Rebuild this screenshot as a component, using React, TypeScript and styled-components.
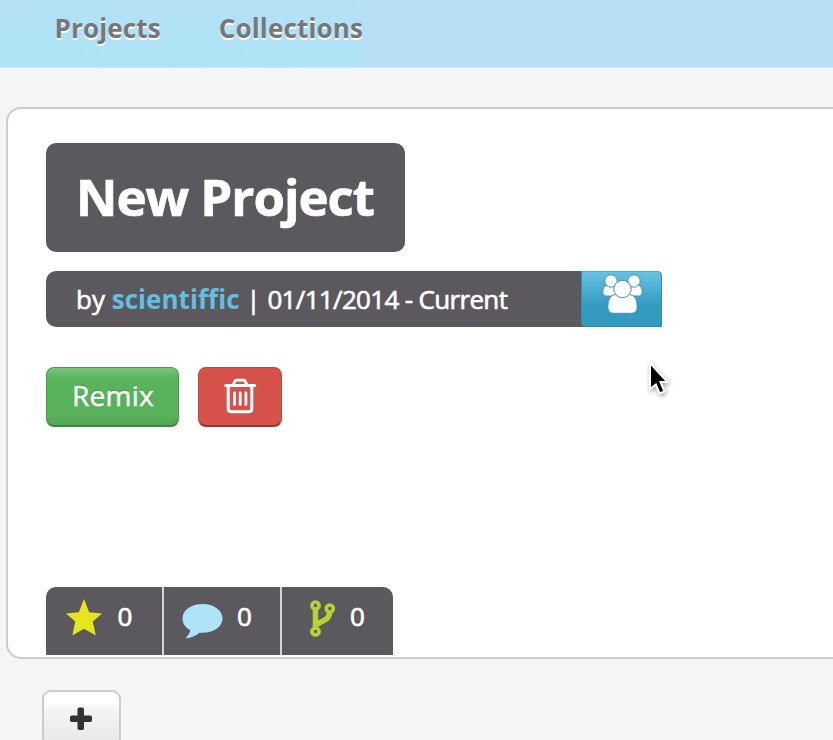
import React from "react";
import styled, { createGlobalStyle } from "styled-components";

const GlobalStyle = createGlobalStyle`
  *, *::before, *::after { box-sizing: border-box; }
  html, body, #root { height: 100%; }
  body {
    margin: 0;
    overflow: hidden;
    background: #f4f5f7;
    font-family: "Open Sans", "Noto Sans", sans-serif;
  }
`;

const Page = styled.div`
  position: relative;
  height: 740px;
  overflow: hidden;
`;

const NavBar = styled.nav`
  display: flex;
  gap: 58px;
  height: 68px;
  padding: 10px 0 0 54.5px;
  background:
    linear-gradient(rgba(183, 223, 246, 0.7), rgba(183, 223, 246, 0) 60px),
    linear-gradient(90deg, #ade4f6 0, #b0e3f6 355px, #b7dff6 368px, #b7dff6 100%);
  border-bottom: 1px solid #c9e8f6;
`;

const NavLink = styled.a`
  color: #77777a;
  font-size: 26px;
  font-weight: 700;
  line-height: 36px;
  letter-spacing: 0.15px;
  text-shadow: 0 2px 0 #fff;
`;

const Panel = styled.main`
  display: flex;
  flex-direction: column;
  align-items: flex-start;
  width: 860px;
  height: 552px;
  margin: 39px 0 0 6px;
  padding: 34px 0 0 38px;
  background: #fff;
  border: 2px solid #cbccce;
  border-radius: 15px;
`;

const Title = styled.h1`
  width: 359px;
  height: 109px;
  margin: 0;
  padding-left: 30px;
  border-radius: 10px;
  background: #5b595e;
  color: #fff;
  font-size: 51px;
  font-weight: 700;
  line-height: 106px;
  letter-spacing: -1.05px;
  white-space: nowrap;
  -webkit-text-stroke: 0.7px #fff;
`;

const Byline = styled.div`
  display: flex;
  width: 616px;
  height: 56px;
  margin-top: 19px;
  border-radius: 10px 5px 0 10px;
  background: #5b595e;
  overflow: hidden;
`;

const BylineText = styled.div`
  flex: 1;
  padding-left: 30px;
  color: #fff;
  font-size: 26px;
  line-height: 57px;
  white-space: nowrap;
  -webkit-text-stroke: 0.6px #fff;
`;

const Author = styled.a`
  color: #62bfe2;
  font-weight: 700;
  letter-spacing: 0.05px;
  -webkit-text-stroke: 0;
`;

const Dates = styled.span`
  letter-spacing: -0.67px;
`;

const TeamButton = styled.button`
  display: flex;
  justify-content: center;
  width: 81px;
  padding: 0;
  border: 1px solid #2f8fbb;
  border-top-color: #4cabd0;
  border-radius: 0 5px 0 5px;
  background: linear-gradient(#66c2e2 0, #5bb9da 8px, #339bbf 34px, #339bbf 100%);
`;

const Actions = styled.div`
  display: flex;
  gap: 19px;
  margin-top: 40px;
`;

const RemixButton = styled.button`
  width: 133px;
  height: 60px;
  padding: 0 0 3px 1px;
  border: 1px solid #4a9b50;
  border-bottom: 2px solid #3e8444;
  border-radius: 8px;
  background: linear-gradient(#7cc67d 0, #5ab45d 10px, #58b25b 46px, #51a655 100%);
  color: #fff;
  font: 400 28px "Open Sans", "Noto Sans", sans-serif;
  letter-spacing: 0.3px;
  text-shadow: 0 -1px 1px #37803a;
  -webkit-text-stroke: 0.5px #fff;
`;

const DeleteButton = styled.button`
  width: 84px;
  height: 60px;
  padding: 0;
  border: 1px solid #c04c40;
  border-bottom: 2px solid #9c352e;
  border-radius: 8px;
  background: #d6514a;
`;

const Stats = styled.div`
  display: flex;
  gap: 2px;
  height: 68px;
  margin: auto 0 2px;
  border-radius: 10px 10px 0 0;
  background: #d5d5d6;
  overflow: hidden;
`;

const Stat = styled.div<{ $width: number; $left: number; $gap: number }>`
  display: flex;
  gap: ${(p) => p.$gap}px;
  width: ${(p) => p.$width}px;
  padding-left: ${(p) => p.$left}px;
  background: #5b595e;
  color: #fff;
  font-size: 26px;
  line-height: 59px;
  -webkit-text-stroke: 0.7px #fff;
`;

const AddButton = styled.button`
  display: block;
  width: 79px;
  height: 60px;
  margin: 31px 0 0 42px;
  padding: 0;
  border: 2px solid #cbccce;
  border-radius: 9px 9px 0 0;
  background: linear-gradient(#fff 0, #fff 12px, #f2fbfc 13px, #f2fbfc 16px, #f5f5f5 17px, #e8e8e8 50px);
`;

const Icon = styled.svg`
  display: block;
  flex: none;
`;

const Pointer = styled.svg`
  position: absolute;
  left: 646px;
  top: 358px;
  filter: drop-shadow(1px 2px 2px rgba(0, 0, 0, 0.35));
`;

function TeamIcon() {
  return (
    <Icon width="48" height="48" viewBox="-0.5 0 48 48" fill="#fff" stroke="#3f93b5" strokeWidth="1">
      <path d="M7 24Q4 24 4.300 20Q4.500 13.500 8 13.500H19V24ZM41 24Q44 24 43.700 20Q43.500 13.500 40 13.500H29V24Z" />
      <circle cx="12.500" cy="9" r="6.200" />
      <circle cx="35.500" cy="9" r="6.200" />
      <path d="M15 41.300Q9.300 41.300 9.300 35Q9.300 23 17 22.500H31Q38.700 23 38.700 35Q38.700 41.300 33 41.300Z" />
      <circle cx="24" cy="17" r="8.700" />
    </Icon>
  );
}

function TrashIcon() {
  return (
    <Icon width="82" height="57" viewBox="0 0 82 57" fill="none" stroke="#fff" strokeLinecap="round" strokeLinejoin="round">
      <path strokeWidth="3" d="M26.700 17.500H55.800M29.200 18.500V40.500Q29.200 43.800 32.500 43.800H49.500Q52.800 43.800 52.800 40.500V18.500" />
      <path strokeWidth="2.800" d="M34.200 17L36 13Q36.500 12.200 37.500 12.200H44.500Q45.500 12.200 46 13L48 17" />
      <path strokeWidth="2.800" d="M35.500 25V36.500M41.200 25V36.500M46.900 25V36.500" />
    </Icon>
  );
}

function StarIcon() {
  return (
    <Icon width="36" height="68" viewBox="0 0 36 68" fill="#e6e61d">
      <path d="M18 12L23.200 25.300L36 26.500L26.800 34.500L29.800 48.500L18 41.800L6.300 48.500L9.300 34.500L0 26.500L12.800 25.300Z" />
    </Icon>
  );
}

function CommentIcon() {
  return (
    <Icon width="41" height="68" viewBox="0 0 41 68" fill="#afe3f8">
      <path d="M20.500 17C9 17 0.500 23.300 0.500 31.500C0.500 36.500 3.500 40.500 8.200 43.100C8 46.500 6 48.500 3.500 51.500C9 51 14 48.800 17.500 45.700C30 46.800 40.500 40.500 40.500 31.500C40.500 23.300 32 17 20.500 17Z" />
    </Icon>
  );
}

function ForkIcon() {
  return (
    <Icon width="26" height="68" viewBox="0 0 26 68" fill="none" stroke="#b5d334">
      <path strokeWidth="5.500" d="M6.500 20V44M20.800 24C20.500 34 13 33 7.500 37.500" />
      <g strokeWidth="3.700" fill="#5b595e">
        <circle cx="6.500" cy="18.500" r="3.500" />
        <circle cx="20.800" cy="21.500" r="3.500" />
        <circle cx="6.500" cy="44.500" r="3.500" />
      </g>
    </Icon>
  );
}

function PlusIcon() {
  return (
    <Icon width="75" height="56" viewBox="0 0 75 56" fill="#333">
      <rect x="26" y="23.500" width="22" height="6.500" rx="1.800" />
      <rect x="33.500" y="15.500" width="6.500" height="22.500" rx="1.800" />
    </Icon>
  );
}

export default function App() {
  return (
    <>
      <GlobalStyle />
      <Page>
        <NavBar>
          <NavLink>Projects</NavLink>
          <NavLink>Collections</NavLink>
        </NavBar>
        <Panel>
          <Title>New Project</Title>
          <Byline>
            <BylineText>
              by <Author>scientiffic</Author> | <Dates>01/11/2014 - Current</Dates>
            </BylineText>
            <TeamButton aria-label="Team">
              <TeamIcon />
            </TeamButton>
          </Byline>
          <Actions>
            <RemixButton>Remix</RemixButton>
            <DeleteButton aria-label="Delete">
              <TrashIcon />
            </DeleteButton>
          </Actions>
          <Stats>
            <Stat $width={116} $left={20} $gap={15.5}>
              <StarIcon />0
            </Stat>
            <Stat $width={116} $left={18} $gap={14}>
              <CommentIcon />0
            </Stat>
            <Stat $width={111} $left={27} $gap={15}>
              <ForkIcon />0
            </Stat>
          </Stats>
        </Panel>
        <AddButton aria-label="Add">
          <PlusIcon />
        </AddButton>
        <Pointer width="24" height="42" viewBox="0 0 24 42">
          <path
            d="M5 6V32L10.800 27.500L14.600 36.500L19.500 34.500L15.500 25H22.500Z"
            transform="translate(-1 -1)"
            fill="#000"
            stroke="#fff"
            strokeWidth="2"
          />
        </Pointer>
      </Page>
    </>
  );
}
